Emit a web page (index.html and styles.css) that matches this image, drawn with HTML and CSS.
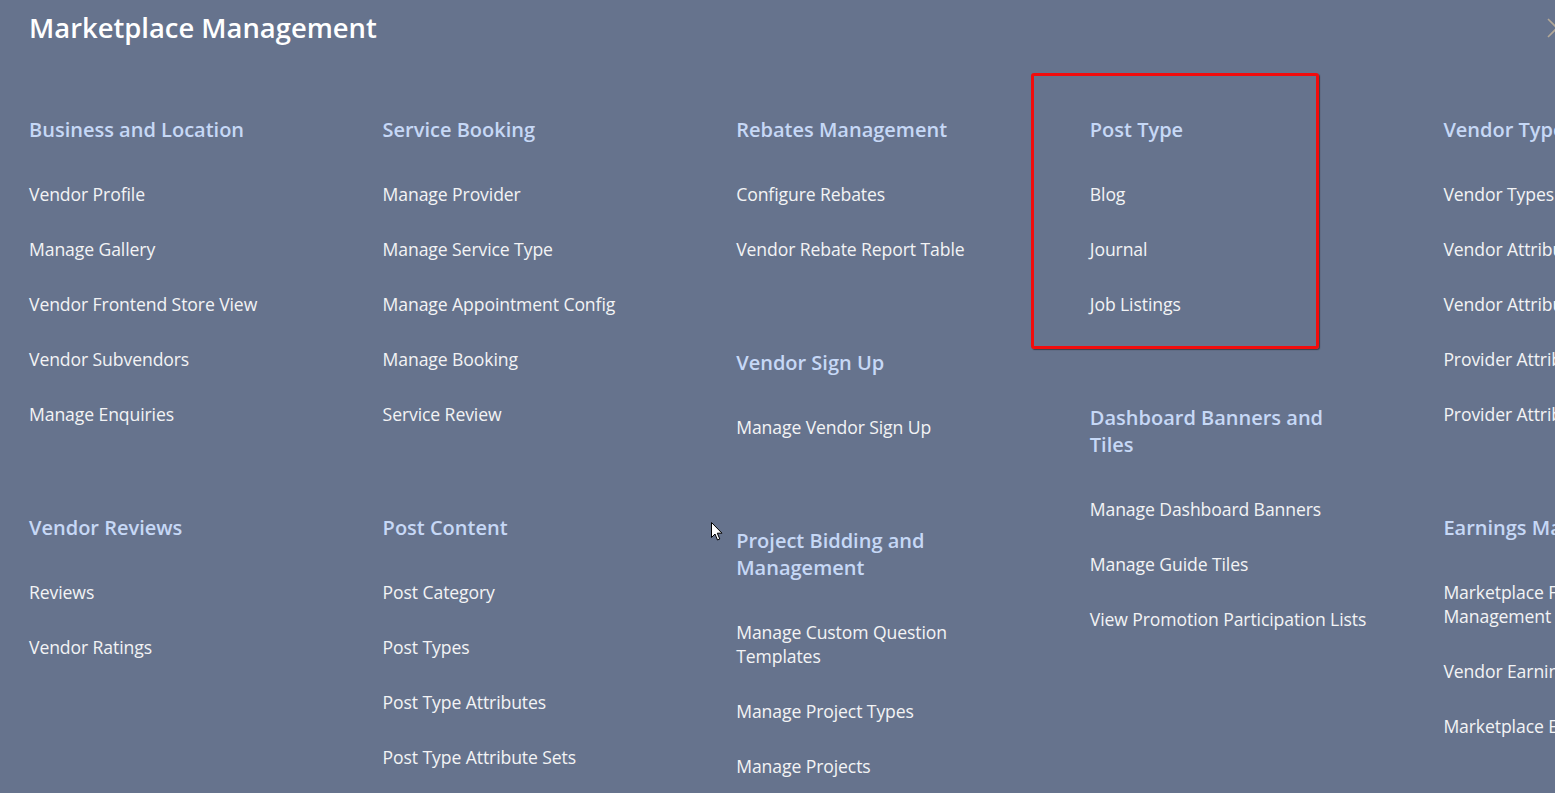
FILE: index.html
```html
<!DOCTYPE html>
<html lang="en">
<head>
<meta charset="utf-8">
<title>Marketplace Management</title>
<link rel="stylesheet" href="styles.css">
</head>
<body>
<div class="panel">
  <h1 class="title">Marketplace Management</h1>
  <button class="close" aria-label="Close">
    <svg width="22" height="22" viewBox="0 0 22 22"><path d="M2 2 L20 20 M20 2 L2 20" stroke="#b3a898" stroke-width="1.6" fill="none"/></svg>
  </button>
  <div class="columns">
    <div class="col">
      <div class="group">
        <h2 class="heading">Business and Location</h2>
        <ul class="items">
          <li>Vendor Profile</li>
          <li>Manage Gallery</li>
          <li>Vendor Frontend Store View</li>
          <li>Vendor Subvendors</li>
          <li>Manage Enquiries</li>
        </ul>
      </div>
      <div class="group">
        <h2 class="heading">Vendor Reviews</h2>
        <ul class="items">
          <li>Reviews</li>
          <li>Vendor Ratings</li>
        </ul>
      </div>
    </div>
    <div class="col">
      <div class="group">
        <h2 class="heading">Service Booking</h2>
        <ul class="items">
          <li>Manage Provider</li>
          <li>Manage Service Type</li>
          <li>Manage Appointment Config</li>
          <li>Manage Booking</li>
          <li>Service Review</li>
        </ul>
      </div>
      <div class="group">
        <h2 class="heading">Post Content</h2>
        <ul class="items">
          <li>Post Category</li>
          <li>Post Types</li>
          <li>Post Type Attributes</li>
          <li>Post Type Attribute Sets</li>
        </ul>
      </div>
    </div>
    <div class="col">
      <div class="group">
        <h2 class="heading">Rebates Management</h2>
        <ul class="items">
          <li>Configure Rebates</li>
          <li>Vendor Rebate Report Table</li>
        </ul>
      </div>
      <div class="group">
        <h2 class="heading">Vendor Sign Up</h2>
        <ul class="items">
          <li>Manage Vendor Sign Up</li>
        </ul>
      </div>
      <div class="group">
        <h2 class="heading">Project Bidding and Management</h2>
        <ul class="items">
          <li>Manage Custom Question Templates</li>
          <li>Manage Project Types</li>
          <li>Manage Projects</li>
        </ul>
      </div>
    </div>
    <div class="col">
      <div class="group highlighted">
        <h2 class="heading">Post Type</h2>
        <ul class="items">
          <li>Blog</li>
          <li>Journal</li>
          <li>Job Listings</li>
        </ul>
        <span class="mark"></span>
      </div>
      <div class="group">
        <h2 class="heading">Dashboard Banners and Tiles</h2>
        <ul class="items">
          <li>Manage Dashboard Banners</li>
          <li>Manage Guide Tiles</li>
          <li>View Promotion Participation Lists</li>
        </ul>
      </div>
    </div>
    <div class="col">
      <div class="group">
        <h2 class="heading">Vendor Type Management</h2>
        <ul class="items">
          <li>Vendor Types</li>
          <li>Vendor Attributes</li>
          <li>Vendor Attribute Sets</li>
          <li>Provider Attributes</li>
          <li>Provider Attribute Sets</li>
        </ul>
      </div>
      <div class="group">
        <h2 class="heading">Earnings Management</h2>
        <ul class="items">
          <li>Marketplace Fee Structure Management</li>
          <li>Vendor Earnings</li>
          <li>Marketplace Earnings</li>
        </ul>
      </div>
    </div>
  </div>
  <svg class="cursor" width="12" height="20" viewBox="0 0 12 20"><path d="M0.5 0.5 L0.5 15.5 L4 12 L6.5 18 L8.8 17 L6.3 11.2 L11 11.2 Z" fill="#fff" stroke="#000" stroke-width="1"/></svg>
</div>
</body>
</html>
```
FILE: styles.css
```css
html, body {
  margin: 0;
  padding: 0;
  width: 1555px;
  height: 793px;
  overflow: hidden;
  background: #66738d;
}

.panel {
  position: relative;
  height: 793px;
  padding-left: 29px;
  font-family: "Open Sans", "Noto Sans", sans-serif;
  box-sizing: border-box;
  overflow: hidden;
}

.title {
  margin: 0;
  padding-top: 10px;
  font-size: 27.4px;
  line-height: 36px;
  font-weight: 600;
  color: #ffffff;
}

.close {
  position: absolute;
  top: 17px;
  left: 1546px;
  padding: 0;
  border: 0;
  background: none;
  width: 22px;
  height: 22px;
}

.columns {
  display: flex;
  margin-top: 70px;
}

.col {
  flex: 0 0 353.6px;
  width: 353.6px;
  padding-right: 73.6px;
  box-sizing: border-box;
}

.group {
  margin-bottom: 88px;
}

.heading {
  margin: 0 0 39px;
  font-size: 20px;
  line-height: 27px;
  font-weight: 600;
  color: #c6d8f6;
}

.items {
  list-style: none;
  margin: 0;
  padding: 0;
  display: flex;
  flex-direction: column;
  gap: 31px;
}

.items li {
  font-size: 17.6px;
  line-height: 24px;
  color: #f3f3f5;
  letter-spacing: -0.1px;
}

.highlighted {
  position: relative;
}

.mark {
  position: absolute;
  left: -59px;
  top: -43px;
  width: 288px;
  height: 276px;
  border: 3px solid #f20c0c;
  border-radius: 3px;
  box-sizing: border-box;
  box-shadow: 1px 1px 1px rgba(40, 40, 40, 0.7);
}

.cursor {
  position: absolute;
  left: 711px;
  top: 522px;
}
```
